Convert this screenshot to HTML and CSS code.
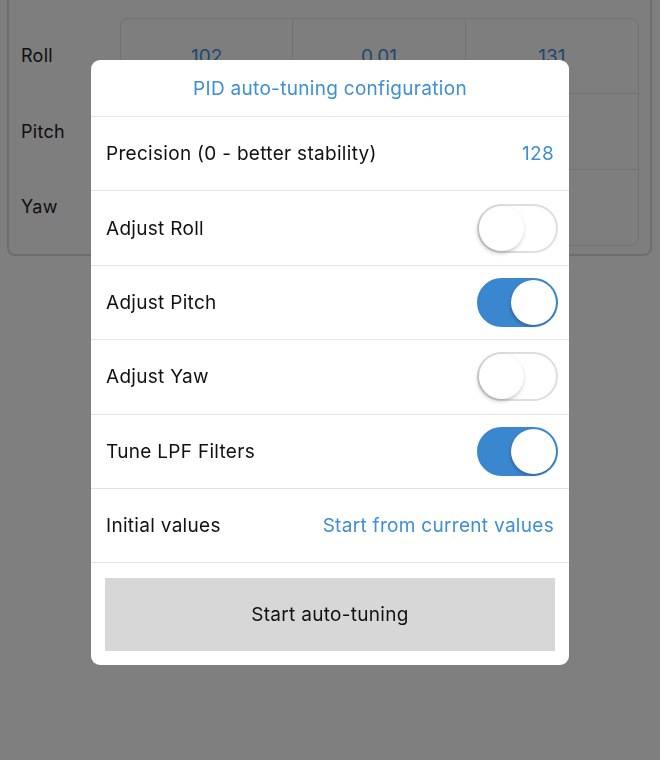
FILE: index.html
```html
<!DOCTYPE html>
<html>
<head>
<meta charset="utf-8">
<link rel="stylesheet" href="styles.css">
</head>
<body>
<div class="page">
  <div class="card">
    <div class="grid">
      <div class="labels">
        <div class="label">Roll</div>
        <div class="label">Pitch</div>
        <div class="label">Yaw</div>
      </div>
      <div class="table">
        <div class="cell val">102</div>
        <div class="cell val">0.01</div>
        <div class="cell val">131</div>
        <div class="cell"></div>
        <div class="cell"></div>
        <div class="cell"></div>
        <div class="cell"></div>
        <div class="cell"></div>
        <div class="cell"></div>
      </div>
    </div>
  </div>
</div>
<div class="overlay">
  <div class="modal">
    <div class="title">PID auto-tuning configuration</div>
    <div class="row"><span class="lbl">Precision (0 - better stability)</span><span class="link">128</span></div>
    <div class="row sw"><span class="lbl">Adjust Roll</span><span class="toggle"><span class="knob"></span></span></div>
    <div class="row sw"><span class="lbl">Adjust Pitch</span><span class="toggle on"><span class="knob"></span></span></div>
    <div class="row sw"><span class="lbl">Adjust Yaw</span><span class="toggle"><span class="knob"></span></span></div>
    <div class="row sw"><span class="lbl">Tune LPF Filters</span><span class="toggle on"><span class="knob"></span></span></div>
    <div class="row"><span class="lbl">Initial values</span><span class="link">Start from current values</span></div>
    <div class="actions"><div class="button">Start auto-tuning</div></div>
  </div>
</div>
</body>
</html>
```
FILE: styles.css
```css
* { box-sizing: border-box; }
html, body { margin: 0; padding: 0; }
body {
  width: 660px;
  height: 760px;
  overflow: hidden;
  background: #ffffff;
  font-family: Inter, "Noto Sans", sans-serif;
  color: #111;
}
.page { padding: 0 8px 0 7px; }
.card {
  margin-top: -20px;
  height: 276px;
  border: 2px solid #dcdcdc;
  border-radius: 8px;
  padding: 36px 11px 0 0;
  background: #fdfdfd;
}
.grid { display: flex; }
.labels {
  width: 111px;
  display: flex;
  flex-direction: column;
}
.label {
  height: 75.5px;
  display: flex;
  align-items: center;
  padding-left: 12px;
  font-size: 18px;
  letter-spacing: 0.3px;
  color: #222;
}
.table {
  flex: 1;
  display: grid;
  grid-template-columns: 1fr 1fr 1fr;
  grid-template-rows: 75px 76px 75px;
  border: 1px solid #e2e2e2;
  border-radius: 8px;
}
.cell {
  border-right: 1px solid #e2e2e2;
  border-bottom: 1px solid #e2e2e2;
  display: flex;
  align-items: center;
  justify-content: center;
  font-size: 19px;
  color: #3a90dc;
}
.cell:nth-child(3n) { border-right: none; }
.cell:nth-child(n+7) { border-bottom: none; }

.overlay {
  position: fixed;
  inset: 0;
  background: rgba(0,0,0,0.5);
  display: flex;
  flex-direction: column;
  align-items: center;
  padding-top: 60px;
}
.modal {
  width: 478px;
  background: #fff;
  border-radius: 9px;
  overflow: hidden;
  letter-spacing: 0.3px;
}
.title {
  height: 57px;
  display: flex;
  align-items: center;
  justify-content: center;
  color: #3d8fd6;
  font-size: 19px;
  border-bottom: 1px solid #e3e3e3;
  padding-top: 1px;
}
.row {
  height: 74.4px;
  display: flex;
  align-items: center;
  justify-content: space-between;
  padding: 0 15px;
  border-bottom: 1px solid #e3e3e3;
  font-size: 19px;
}
.row.sw { padding-right: 11px; }
.lbl { color: #111; }
.link { color: #3d8fd6; }
.toggle {
  position: relative;
  width: 81px;
  height: 49px;
  border-radius: 25px;
  border: 2px solid #dedede;
  background: #fff;
}
.toggle .knob {
  position: absolute;
  top: 0;
  left: 0;
  width: 45px;
  height: 45px;
  border-radius: 50%;
  background: #fff;
  box-shadow: -1px 2px 4px rgba(0,0,0,0.25);
}
.toggle.on {
  background: #3a86cf;
  border-color: #3a86cf;
}
.toggle.on .knob {
  left: auto;
  right: 0;
  box-shadow: -1px 2px 3px rgba(0,0,0,0.2);
}
.actions { padding: 15px 14px 14px; }
.button {
  height: 73px;
  background: #d7d7d7;
  display: flex;
  align-items: center;
  justify-content: center;
  font-size: 19px;
  color: #111;
}
```
